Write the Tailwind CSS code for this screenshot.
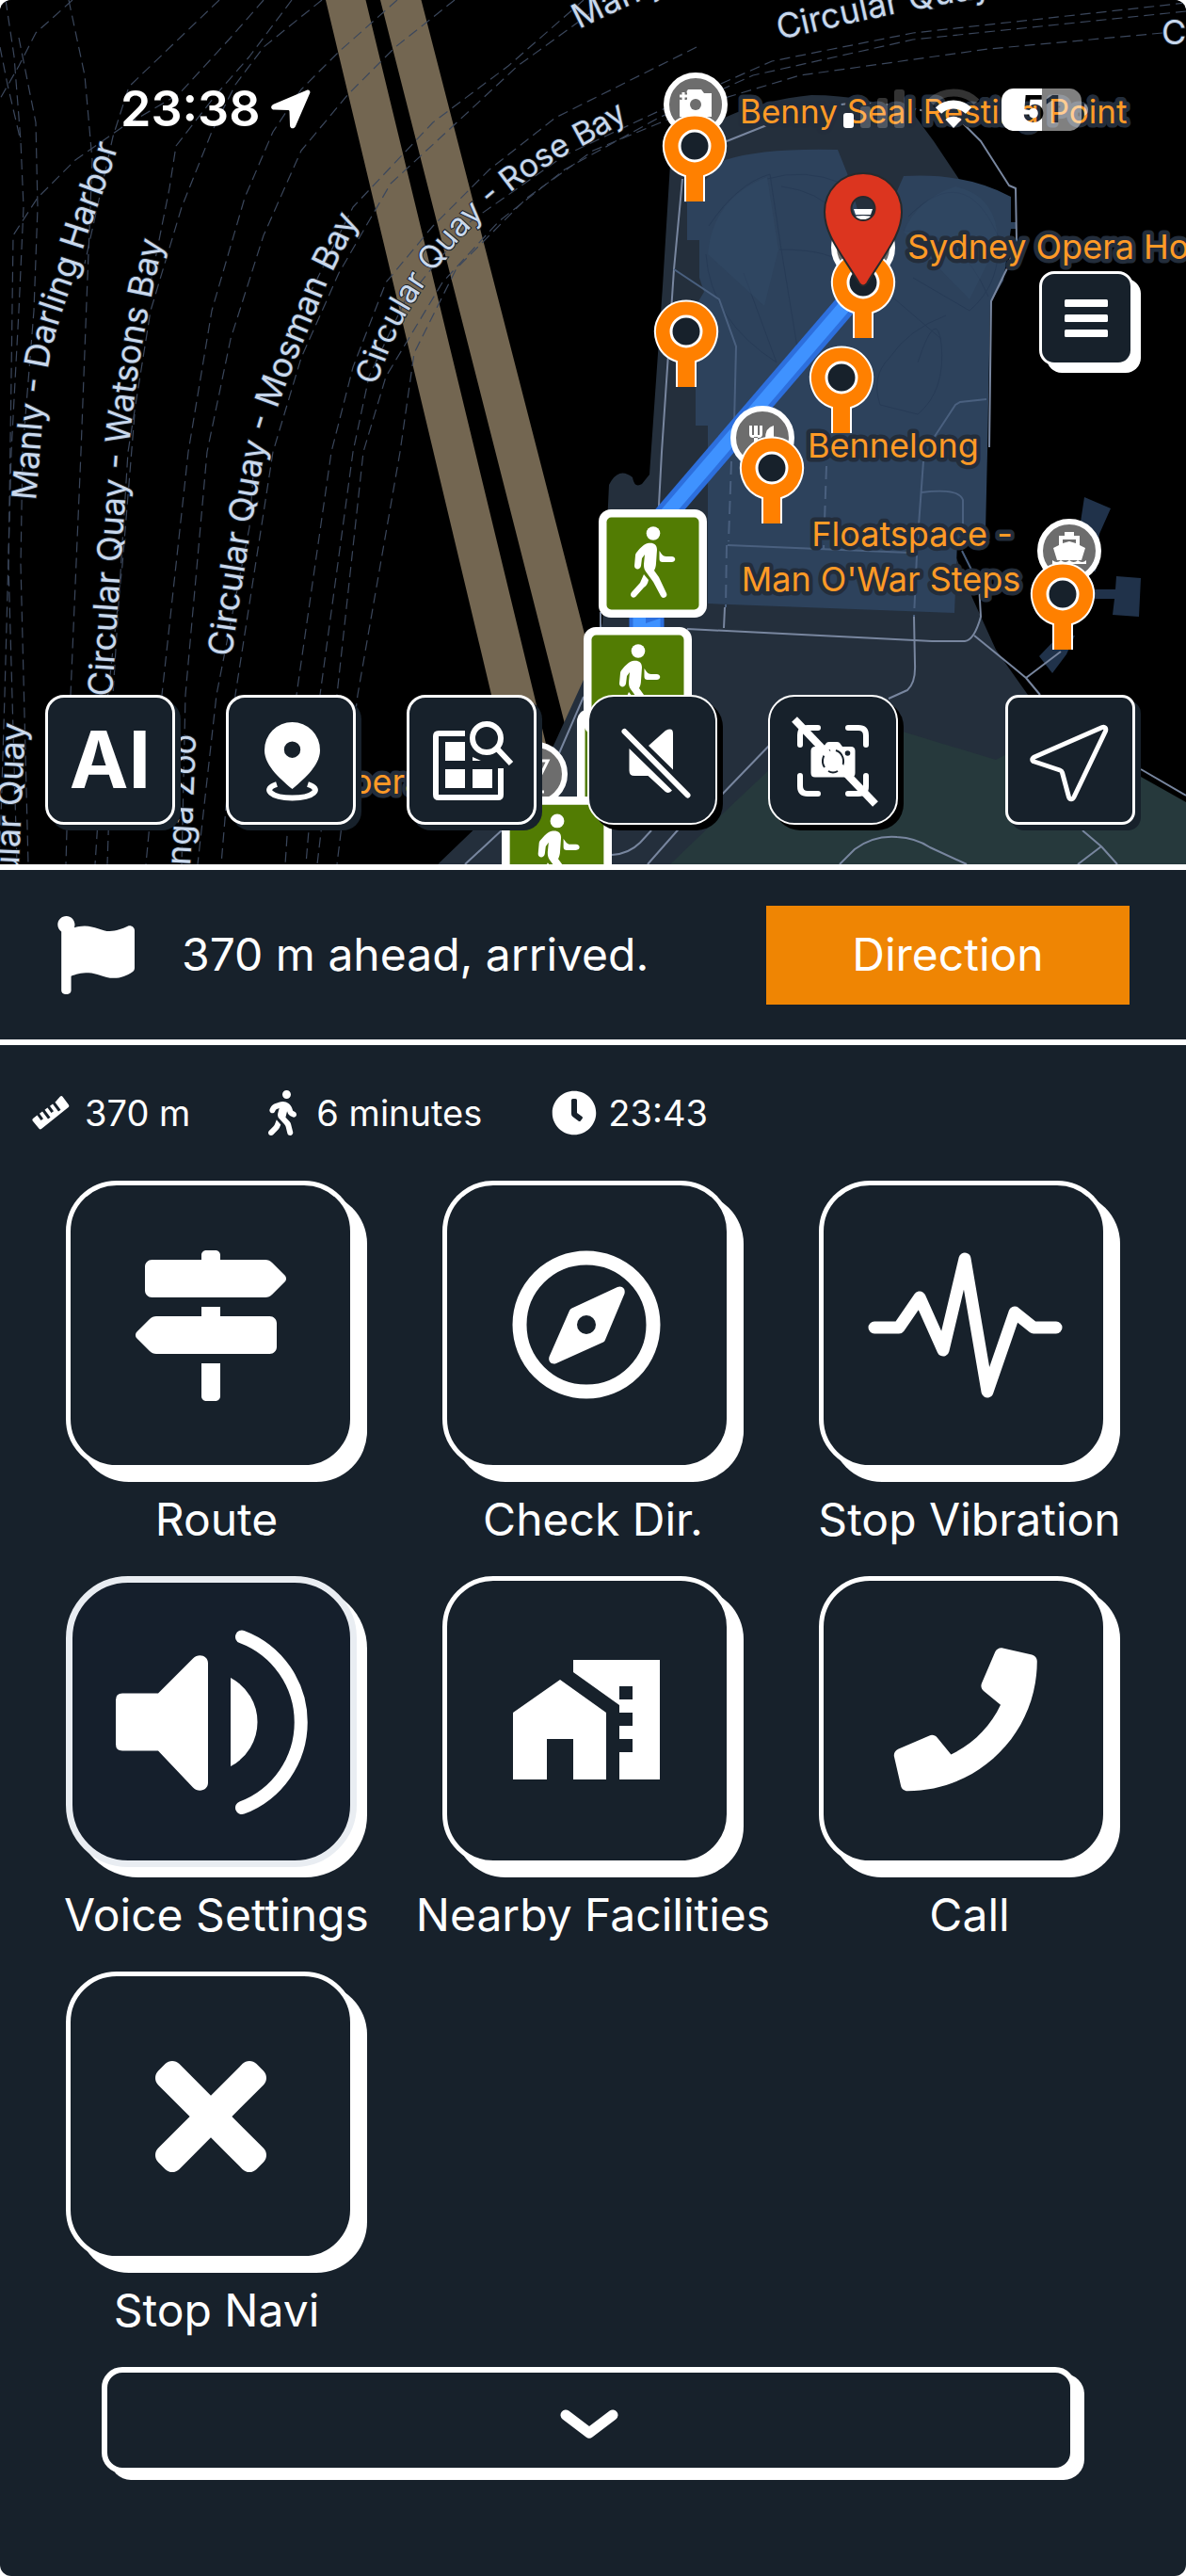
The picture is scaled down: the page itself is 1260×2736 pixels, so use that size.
<!DOCTYPE html>
<html lang="en">
<head>
    <meta charset="UTF-8">
    <meta name="viewport" content="width=device-width, initial-scale=1.0">
    <title>Walking Navigation</title>
    <script src="https://cdn.jsdelivr.net/npm/@tailwindcss/browser@4"></script>
</head>
<body class="bg-white font-['Inter','Liberation_Sans',sans-serif] text-white">
    <div class="min-h-screen flex flex-col bg-[#17212b] rounded-xl overflow-hidden">

        <!-- Map -->
        <section class="relative h-[918px] bg-black overflow-hidden" aria-label="Map">
            <svg class="absolute inset-0 w-full h-full" viewBox="0 0 1260 918" preserveAspectRatio="xMidYMid slice">
                <defs>
                    <symbol id="pin" viewBox="0 0 70 96" overflow="visible">
                        <path d="M35 1.5a33 33 0 0 1 10 64.500V93H25V66A33 33 0 0 1 35 1.500z" fill="#ff8000"/>
                        <path d="M25 93V66a33 33 0 1 1 20 0v27" fill="none" stroke="#fff" stroke-width="2"/>
                        <circle cx="35" cy="34" r="16" fill="#17212b" stroke="#fff" stroke-width="3"/>
                    </symbol>
                    <symbol id="poi" viewBox="0 0 70 70">
                        <circle cx="35" cy="35" r="31" fill="#6d6d6d" stroke="#fff" stroke-width="6"/>
                    </symbol>
                    <symbol id="sign" viewBox="0 0 115 115">
                        <rect width="115" height="115" rx="13" fill="#fff"/>
                        <rect x="8.500" y="8.500" width="98" height="98" rx="5" fill="#527c03"/>
                        <circle cx="58" cy="25.500" r="7.300" fill="#fff"/>
                        <path d="M52 36c6-1 10 1 10 7l-1 14c0 3-1 6-2 8l5 7 8 17c2 4-4 7-6 3l-8-15-8-11c-2-3-2-5-2-8l1-10-3 4-1 8c-1 5-7 4-7 0l1-11c0-2 1-3 2-4 3-4 7-8 11-9z" fill="#fff"/>
                        <path d="M48 69l5 6c-1 4-2 6-5 8l-8 9c-3 4-8 0-5-4l9-10z" fill="#fff"/>
                        <path d="M64.500 44c2 3 4 6 7 6h6c5 0 5 6 0 6h-9c-3 0-4-1-4-4z" fill="#fff"/>
                    </symbol>
                    <path id="lblManly" d="M38 532C43 480 45 430 52 385C60 340 75 310 88 265C100 225 114 195 124 160"/>
                    <path id="lblWatsons" d="M119 740C124 660 131 560 137 475C143 410 153 350 162 310C167 285 172 265 178 230"/>
                    <path id="lblMosman" d="M246 698C255 630 268 550 280 485C290 435 318 375 350 295C364 268 376 242 392 212"/>
                    <path id="lblRose" d="M400 410C418 350 445 310 470 277C500 235 560 185 615 157C640 145 660 130 690 112"/>
                    <path id="lblTop" d="M615 31C656 10 700 -8 740 -22"/>
                    <path id="lblTop2" d="M828 42C885 30 945 12 1080 -8"/>
                    <path id="lblLeft" d="M16 1010C20 920 23 850 27 768"/>
                    <path id="lblZoo" d="M193 1040C202 940 205 870 208 780"/>
                </defs>

                <!-- Bridge -->
                <path d="M346 0h42.500L611 918h-46zM404 0h43.500L684 918h-46z" fill="#736651"/>

                <!-- Ferry lines -->
                <g fill="none" stroke="#3b475c" stroke-width="1.200" stroke-dasharray="11 6" stroke-linejoin="round">
                    <path d="M6 0L15 60 22 150 25 220 20 330 12 480 5 738 0 900"/>
                    <path d="M0 50L8 90 22 150M20 40L38 130 40 220 36 330 24 480 22 600 30 918"/>
                    <path d="M77 0L38 35 20 70 0 105"/>
                    <path d="M73 0L90 80 98 170 92 320 86 480 75 738 70 918"/>
                    <path d="M233 0L137 92 120 145 90 280"/>
                    <path d="M280 0L245 40 190 100 130 135 80 170 40 210 14 250 12 400 9 600 18 918"/>
                    <path d="M310 0L265 60 230 100 187 155 180 200 160 300M143 440L130 600 110 780 101 918"/>
                    <path d="M342 0L280 50 250 90 225 140 193 220 160 330 136 480 120 738 114 918"/>
                    <path d="M422 0L360 55 320 95 290 140 260 210 225 330 200 480 172 738 155 918"/>
                    <path d="M483 0L420 50 370 100 320 160 280 250 245 360 220 480 197 738 193 918"/>
                    <path d="M620 0L540 70 460 130 375 220 330 310M270 490L265 560 230 738 210 918"/>
                    <path d="M630 12L550 70 480 135 415 195 360 290 320 380 290 480 250 738 235 918"/>
                    <path d="M740 50L650 95 590 125 520 180 460 240 410 300 375 390 352 480 315 738 303 918"/>
                    <path d="M1260 3L970 35 820 65 700 118 600 165 500 235 430 320 392 400 375 480 340 738 325 918"/>
                    <path d="M1260 12L970 42 800 80 700 125 600 180 530 235 470 300 410 400 386 480 358 738 337 918"/>
                    <path d="M1235 35L1050 52 850 80 750 110 630 160 560 210 485 285 440 375 425 480 380 738 358 918"/>
                </g>

                <!-- Land -->
                <path d="M465 918l55-53 68-73 32-70 20-60 7-147q10-20 25-8 2 12 10 7l8-10 14-200 8-130q20-30 60-50 40-18 90-23 60 0 110 22l20 27 30 45 12 10-1 85-27 45-5 245 10 0 22 55 25 55 34 48 75 65q25 18 48 30V918z" fill="#242f3c"/>
                <path d="M712 918l55-53 53-50 60-55 79 17 99 30 32-17 122 35 48 27v66z" fill="#26393c"/>
                <path d="M1152 528l28 12-12 27-4 40h-24zM1186 612l26 2-2 41-28-2 2-17h-26v-10h27zM1104 697l21-22 17 0-9 20-15 20z" fill="#20324a"/>

                <!-- Opera House -->
                <path d="M770 170q40-13 120-11l10 25 20 70 33-51 7-16q65-4 114 22v27h6v7h-6l-8 55-14 24-3 158-2 85-30 10-3 76-262-10V452h-13V325l9-15-5-15v-40h-13v-40h-4z" fill="#2d425c"/>
                <g fill="none" stroke="#273b56" stroke-width="1">
                    <path d="M753 240q30-45 65-55l12 80 18 110M830 198q40 5 60 30M828 265q60 0 70 20M750 270q5 70 75 115l-35-95M815 190q40-12 80 5M965 230q60-60 95 20 5 50-30 80l-60-35M975 385q20-60 25-20 5 50-25 75l-40-10q-10-30 10-50 20-30 60-45M930 300l70 60M960 245q60 0 90 70"/>
                </g>
                <path d="M815 188l12 77-15 60-60-55q5-60 63-82z" fill="#324966" opacity=".5"/>
                <path d="M1015 198q45 10 45 60l-30 60-70-72q15-35 55-48z" fill="#324966" opacity=".5"/>

                <!-- Footpaths -->
                <g fill="none" stroke="#78869f" stroke-width="2" stroke-linejoin="round">
                    <path d="M725 190l-9 96-13 194-4 75M772 150l50-20 48-15M1020 128l22 22 30 47 7 3 1 55-10 30-17 35-2 155"/>
                    <path d="M870 115q60-15 150 13" stroke-dasharray="8 4"/>
                    <path d="M697 553l-20-3M670 548q-16-2-19 10M638 650l0 20M730 668l241 12 19 1h35q10-1 17-26l-2-35"/>
                    <path d="M1035 675l43 35 12 10 15 18M1090 720l37-28M770 645l-1 22M971 655l1 50q1 20-8 28l-20 9M817 792l-56 58M688 918l37-42M892 918l16-16q20-15 45-13 20 1 35 11l39 18M1150 882l20 17 17 19M1170 899l-25 19M1212 817l48 28M494 918l41-38M620 740l-26 60M650 908q18-1 30-13l12-13"/>
                </g>
                <g fill="none" stroke="#4a607f" stroke-width="2">
                    <path d="M716 286l48 32 18 50-2 82M992 465l23-35 5-3 28-3M773 579l193 8M981 490l-7 95M979 523q40-5 44 8v50M1022 585l10 20"/>
                    <path d="M772 579l-1 66M777 490l-3 85M878 495l-3 88M974 590l-3 65" stroke-dasharray="14 7"/>
                </g>

                <!-- Route -->
                <path d="M900 322L700 555" stroke="#2d6fdd" stroke-width="24"/>
                <path d="M900 322L700 555" stroke="#3f92ff" stroke-width="14"/>
                <path d="M687 640v40" stroke="#2d6fdd" stroke-width="37"/>
                <path d="M687 640v40" stroke="#3f92ff" stroke-width="29"/>
                <path d="M686 656l18 0-18 6z" fill="#2d6fdd"/>

                <!-- Ferry labels -->
                <g fill="#c9d8ec" stroke="#17212b" stroke-width="2" paint-order="stroke" font-size="36">
                    <text><textPath href="#lblManly">Manly - Darling Harbor</textPath></text>
                    <text><textPath href="#lblWatsons">Circular Quay - Watsons Bay</textPath></text>
                    <text><textPath href="#lblMosman">Circular Quay - Mosman Bay</textPath></text>
                    <text font-size="34"><textPath href="#lblRose">Circular Quay - Rose Bay</textPath></text>
                    <text><textPath href="#lblTop">Manly</textPath></text>
                    <text><textPath href="#lblTop2">Circular Quay</textPath></text>
                    <text x="1234" y="47">C</text>
                    <text text-anchor="end"><textPath href="#lblLeft" startOffset="100%">Circular Quay</textPath></text>
                    <text text-anchor="end"><textPath href="#lblZoo" startOffset="100%">Taronga Zoo</textPath></text>
                </g>

                <!-- Points of interest -->
                <use href="#poi" x="704" y="76" width="70" height="70"/>
                <path d="M722 99h6l3-4h14l3 4h8v25h-34z" fill="#fff"/>
                <circle cx="739" cy="111" r="6" fill="#6d6d6d"/>
                <path d="M720 102h10M726 97v9" stroke="#6d6d6d" stroke-width="7"/>
                <path d="M722 102h8M726 98v8" stroke="#fff" stroke-width="3"/>
                <use href="#poi" x="775" y="430" width="70" height="70"/>
                <path d="M796 452v9q0 4 4 4h6q4 0 4-4v-9h-3v10h-2v-10h-4v10h-2v-10zM801 464h4v14h-4zM822 452q-9 2-9 14h5v12h4z" fill="#fff"/>
                <use href="#poi" x="1101" y="550" width="70" height="70"/>
                <path d="M1131 565h10v4h6v10l6 3-4 13h-26l-4-13 6-3v-10h6zM1129 573v4l7-2 7 2v-4zM1118 595q5 4 9 0 5 4 9 0 5 4 9 0 5 4 9 0v4h-36z" fill="#fff" fill-rule="evenodd"/>
                <use href="#poi" x="882" y="228" width="70" height="70"/>
                <use href="#poi" x="534" y="787" width="70" height="70"/>
                <path d="M570 808h12l-8 16M574 841h4" stroke="#fff" stroke-width="3" fill="none"/>

                <!-- Place labels -->
                <g fill="#ff9a26" stroke="#232d3b" stroke-width="9" stroke-linejoin="round" paint-order="stroke" font-size="36">
                    <text x="786" y="131" font-size="35">Benny Seal Resting Point</text>
                    <text x="964" y="275">Sydney Opera House</text>
                    <text x="969" y="580" text-anchor="middle">Floatspace -</text>
                    <text x="936" y="628" text-anchor="middle">Man O'War Steps</text>
                    <text x="346" y="843">Opera</text>
                </g>

                <use href="#pin" x="703" y="121" width="70" height="96"/>
                <use href="#pin" x="882" y="266" width="70" height="96"/>
                <use href="#pin" x="694" y="318" width="70" height="96"/>
                <use href="#pin" x="859" y="367" width="70" height="96"/>
                <use href="#pin" x="785" y="463" width="70" height="96"/>
                <use href="#pin" x="1094" y="597" width="70" height="96"/>
                <text x="858" y="486" font-size="36" fill="#ff9a26" stroke="#232d3b" stroke-width="9" stroke-linejoin="round" paint-order="stroke">Bennelong</text>

                <!-- Destination -->
                <path d="M917 184c23 0 41 18 41 41 0 24-17 43-37 76q-4 5-8 0c-20-33-37-52-37-76 0-23 18-41 41-41zm0 25a12.500 12.500 0 1 0 0 25 12.500 12.500 0 0 0 0-25z" fill="#dc351f" stroke="#27292c" stroke-width="2" fill-rule="evenodd"/>
                <path d="M907 222h20l-2 6h-16z" fill="#fff"/>

                <use href="#sign" x="613" y="753" width="115" height="115"/>
                <use href="#sign" x="620" y="666" width="115" height="115"/>
                <use href="#sign" x="636" y="541" width="115" height="115"/>
                <use href="#sign" x="533" y="846" width="117" height="117"/>
            </svg>

            <!-- Status bar -->
            <div class="absolute inset-x-0 top-[90px] h-[52px] pl-[128px] pr-[104px] flex items-center justify-between">
                <div class="flex items-center gap-3">
                    <span class="text-[52px] leading-[52px] font-semibold">23:38</span>
                    <svg class="w-[42px] h-[42px]" viewBox="0 0 42 42" fill="#fff"><path d="M38 .8c2-1 4 .8 3.300 3L26 39c-1.500 3.500-6 3-6-1l-.5-14.500c0-1-.5-1.500-1.500-1.500L3.500 21.500c-4 0-4.500-4-1-5.800z"/></svg>
                </div>
                <div class="flex items-center gap-6">
                    <svg class="w-[66px] h-[44px]" viewBox="0 0 66 44" fill="#fff">
                        <rect y="26" width="11" height="16" rx="3"/>
                        <g opacity=".2"><rect x="18" y="19" width="11" height="23" rx="3"/><rect x="36" y="10" width="11" height="32" rx="3"/><rect x="54" y="1" width="11" height="41" rx="3"/></g>
                    </svg>
                    <svg class="w-[54px] h-[44px]" viewBox="0 0 54 44" fill="none" stroke="#fff">
                        <path d="M2.500 14.500a35 35 0 0 1 49 0" stroke-width="8" opacity=".2"/>
                        <path d="M11 23.500a23 23 0 0 1 32 0" stroke-width="9"/>
                        <path d="M27 42l-8.500-9a13 13 0 0 1 17 0z" fill="#fff" stroke="none"/>
                    </svg>
                    <svg class="w-[92px] h-[46px]" viewBox="0 0 92 46">
                        <mask id="level">
                            <rect width="92" height="46" fill="#fff"/>
                            <text x="42" y="37" text-anchor="middle" font-size="39" font-weight="700" fill="#000">51</text>
                        </mask>
                        <g mask="url(#level)">
                            <path d="M14 1h29v45H14A13 13 0 0 1 0 33V14A13 13 0 0 1 14 1z" fill="#fff"/>
                            <path d="M43 1h28a13 13 0 0 1 14 13v19a13 13 0 0 1-14 13H43z" fill="#fff" opacity=".5"/>
                        </g>
                        <path d="M88 17q4 2 4 6.500T88 30z" fill="#fff" opacity=".5"/>
                    </svg>
                </div>
            </div>

            <button aria-label="Menu" class="absolute right-14 top-[288px] size-[100px] grid place-items-center bg-[#17212b] border-[3px] border-white rounded-[16px] shadow-[8px_8px_0_#fff]">
                <svg class="w-[46px] h-[42px]" viewBox="0 0 46 42" fill="#fff"><rect y="1" width="46" height="8" rx="1.500"/><rect y="17" width="46" height="8" rx="1.500"/><rect y="33" width="46" height="8" rx="1.500"/></svg>
            </button>

            <!-- Map controls -->
            <div class="absolute inset-x-0 bottom-[42px] pl-12 pr-[54px] flex gap-[54px]">
                <button class="size-[138px] bg-[#17212b] border-[3px] border-white rounded-[20px] shadow-[6px_6px_0_#17212b] text-[84px] leading-none font-bold">AI</button>
                <button aria-label="Current place" class="size-[138px] bg-[#17212b] border-[3px] border-white rounded-[20px] shadow-[6px_6px_0_#17212b]">
                    <svg viewBox="3 3 132 132">
                        <path d="M70.500 29a29.500 29.500 0 0 1 29.500 30c0 17-20 33-29.500 41C61 92 41 76 41 59a29.500 29.500 0 0 1 29.500-30zm0 20.500a8.700 8.700 0 1 0 0 17.400 8.700 8.700 0 0 0 0-17.400z" fill="#fff" fill-rule="evenodd"/>
                        <path d="M54 95c-16 5-6 14.500 16.500 14.500S103 100 87 95" fill="none" stroke="#fff" stroke-width="6"/>
                    </svg>
                </button>
                <button aria-label="Search floor map" class="size-[138px] bg-[#17212b] border-[3px] border-white rounded-[20px] shadow-[6px_6px_0_#17212b]">
                    <svg viewBox="3 3 132 132" fill="none" stroke="#fff" stroke-width="6">
                        <path d="M62 41H34q-3 0-3 3v62q0 3 3 3h63q3 0 3-3V78"/>
                        <path d="M41 50h21v20H41zM41 79h21v20H41zM70 79h21v20H70z" fill="#fff" stroke="none"/>
                        <path d="M70 66l9 4h-9z" fill="#fff" stroke="none"/>
                        <circle cx="85" cy="46" r="15"/>
                        <path d="M96 57l15 16"/>
                    </svg>
                </button>
                <button aria-label="Unmute" class="size-[138px] bg-[#17212b] border-2 border-white rounded-[28px] shadow-[6px_6px_0_#000]">
                    <svg viewBox="2 2 134 134" fill="#fff">
                        <path d="M65 54l18-16q8-4 8 3v38.500zM44.500 57L90 101.500q-3 4-7 1.500L64.500 86H50q-5.500 0-5.500-5.500z"/>
                        <path d="M39.500 39l67 67.500" stroke="#fff" stroke-width="6" stroke-linecap="round"/>
                    </svg>
                </button>
                <button aria-label="Camera scan off" class="size-[138px] bg-[#17212b] border-2 border-white rounded-[28px] shadow-[6px_6px_0_#000]">
                    <svg viewBox="2 2 134 134" fill="none">
                        <path d="M34 53V43q0-8 8-8h11M85 35h11q8 0 8 8v10M104 86v11q0 8-8 8H85M53 105H42q-8 0-8-8V86" stroke="#fff" stroke-width="6" stroke-linecap="round"/>
                        <path d="M50 55h9l3-4q1-1 3-1h8q2 0 3 1l3 4h9q4.500 0 4.500 4.500V83q0 4.500-4.500 4.500H50q-4.500 0-4.500-4.500V59.500Q45.500 55 50 55z" fill="#fff"/>
                        <path d="M66 59a12 12 0 0 0-6 18M72 59a12 12 0 0 1 6 18M64 81q5 3 10 0" stroke="#17212b" stroke-width="2"/>
                        <circle cx="84.500" cy="62" r="2.800" fill="#17212b"/>
                        <path d="M28 26l86 90" stroke="#fff" stroke-width="8"/>
                    </svg>
                </button>
                <button aria-label="Locate me" class="ml-auto size-[138px] bg-[#17212b] border-[3px] border-white rounded-[14px] shadow-[6px_6px_0_#17212b]">
                    <svg viewBox="3 3 132 132" fill="none" stroke="#fff" stroke-width="5" stroke-linejoin="round">
                        <path d="M103 34.500L31 66c-3 1.500-3 4 0 5l27 9c1.500.5 2 1 2.500 2.500l7 26c1 3 4 3 5.500 0l33.500-70c1-3-1-5-3.500-4z"/>
                    </svg>
                </button>
            </div>
        </section>

        <!-- Next step -->
        <section class="h-48 border-y-[6px] border-white px-[60px] flex items-center">
            <svg class="size-[83px]" viewBox="0 0 512 512" fill="#fff"><path d="M349.565 98.783C295.978 98.783 251.721 64 184.348 64c-24.955 0-47.309 4.384-68.045 12.013a55.947 55.947 0 0 0 3.586-23.562C118.117 24.015 94.806 1.206 66.338.048 34.345-1.254 8 24.296 8 56c0 19.026 9.497 35.825 24 45.945V488c0 13.255 10.745 24 24 24h16c13.255 0 24-10.745 24-24v-94.400c28.311-12.064 63.582-22.122 114.435-22.122 53.588 0 97.844 34.783 165.217 34.783 48.169 0 86.667-16.294 122.505-40.858C506.840 359.452 512 349.571 512 339.045v-243.100c0-23.393-24.269-38.870-45.485-29.016-34.338 15.948-76.454 31.854-116.950 31.854z"/></svg>
            <p class="ml-[50px] text-[48px] leading-[60px]">370 m ahead, arrived.</p>
            <button class="ml-auto w-[386px] h-[105px] bg-[#ef8503] text-[48px] leading-[60px]">Direction</button>
        </section>

        <!-- Trip summary -->
        <ul class="pt-12 pl-[30px] flex gap-[74px] text-[38px] leading-[48px]">
            <li class="flex items-center gap-3">
                <svg class="size-12" viewBox="0 0 48 48" fill="#fff"><path d="M5 30l4.500-3.500 4 5.500 2.500-1.800-4-5.500 3-2.200 6 8 2.500-1.800-6-8 3-2.200 4 5.500 2.500-1.800-4-5.500 3-2.200 6 8 2.500-1.800-6-8L34 6.500q1.500-1 2.500.3l6.500 8.700q1 1.500-.3 2.500L14 41q-1.500 1-2.500-.3L4.700 32.500q-1-1.500.3-2.500z"/></svg>
                370 m
            </li>
            <li class="flex items-center gap-3">
                <svg class="size-12" viewBox="-96 0 512 512" fill="#fff"><path d="M208 96c26.500 0 48-21.500 48-48S234.500 0 208 0s-48 21.500-48 48 21.500 48 48 48zm94.500 149.100l-23.300-11.800-9.700-29.400c-14.700-44.600-55.700-75.800-102.200-75.900-36-.1-55.900 10.100-93.300 25.200-21.600 8.700-39.300 25.200-49.700 46.200L17.600 213c-7.800 15.800-1.500 35 14.200 42.900 15.600 7.900 34.600 1.500 42.500-14.300L81 228c3.500-7 9.300-12.500 16.500-15.400l26.800-10.800-15.200 60.700c-5.200 20.800.4 42.900 14.900 58.800l59.900 65.400c7.200 7.900 12.300 17.400 14.900 27.700l18.300 73.300c4.300 17.100 21.700 27.600 38.800 23.300 17.100-4.300 27.600-21.700 23.300-38.800l-22.200-89c-2.600-10.300-7.700-19.900-14.900-27.700l-45.500-49.700 17.200-68.700 5.500 16.500c5.300 16.100 16.700 29.400 31.700 37l23.300 11.800c15.600 7.900 34.600 1.500 42.500-14.300 7.700-15.700 1.400-35.100-14.300-43zM73.600 385.800c-3.200 8.100-8 15.400-14.200 21.500l-50 50.100c-12.500 12.500-12.500 32.800 0 45.300s32.700 12.500 45.200 0l59.400-59.400c6.100-6.100 10.900-13.400 14.200-21.500l13.500-33.800c-55.300-60.300-38.700-41.800-47.400-53.700l-20.700 51.500z"/></svg>
                6 minutes
            </li>
            <li class="flex items-center gap-3">
                <svg class="size-12" viewBox="0 0 512 512" fill="#fff"><path d="M256,8C119,8,8,119,8,256S119,504,256,504,504,393,504,256,393,8,256,8Zm92.490,313h0l-20,25a16,16,0,0,1-22.490,2.500h0l-67-49.720a40,40,0,0,1-15-31.230V112a16,16,0,0,1,16-16h32a16,16,0,0,1,16,16V256l58,42.500A16,16,0,0,1,348.490,321Z"/></svg>
                23:43
            </li>
        </ul>

        <!-- Actions -->
        <div class="mt-12 px-[30px] grid grid-cols-3 gap-y-[30px] text-[48px] leading-[60px] text-center whitespace-nowrap">
            <div class="flex flex-col items-center gap-[10px]">
                <div class="size-80">
                    <button aria-labelledby="route" class="size-[307px] grid place-items-center border-[5px] border-white rounded-[54px] bg-[#17212b] shadow-[13px_13px_0_#fff]">
                        <svg class="size-40" viewBox="0 0 512 512" fill="#fff"><path d="M507.310 84.690L464 41.370c-6-6-14.140-9.370-22.630-9.370H288V16c0-8.840-7.160-16-16-16h-32c-8.840 0-16 7.160-16 16v16H56c-13.250 0-24 10.750-24 24v80c0 13.250 10.750 24 24 24h385.370c8.490 0 16.620-3.370 22.630-9.370l43.310-43.310c6.250-6.260 6.250-16.380 0-22.630zM224 496c0 8.840 7.160 16 16 16h32c8.840 0 16-7.160 16-16V384h-64v112zm232-272H288v-32h-64v32H70.630c-8.490 0-16.620 3.370-22.630 9.370L4.690 276.690c-6.250 6.250-6.250 16.380 0 22.630L48 342.630c6 6 14.140 9.370 22.630 9.370H456c13.250 0 24-10.750 24-24v-80c0-13.250-10.750-24-24-24z"/></svg>
                    </button>
                </div>
                <span id="route">Route</span>
            </div>
            <div class="flex flex-col items-center gap-[10px]">
                <div class="size-80">
                    <button aria-labelledby="check" class="size-[307px] grid place-items-center border-[5px] border-white rounded-[54px] bg-[#17212b] shadow-[13px_13px_0_#fff]">
                        <svg class="size-40" viewBox="0 0 160 160">
                            <circle cx="79" cy="79" r="71" fill="none" stroke="#fff" stroke-width="15"/>
                            <path d="M112 39c4-2 9 1 7.500 7L99 95q-.5 1.500-2 2.500L47 120c-5 2-9-2-7.500-7L61 64q.8-1.800 2.500-2.500zM79 69a10 10 0 1 0 0 20 10 10 0 0 0 0-20z" fill="#fff" fill-rule="evenodd"/>
                        </svg>
                    </button>
                </div>
                <span id="check">Check Dir.</span>
            </div>
            <div class="flex flex-col items-center gap-[10px]">
                <div class="size-80">
                    <button aria-labelledby="vibration" class="size-[307px] grid place-items-center border-[5px] border-white rounded-[54px] bg-[#17212b] shadow-[13px_13px_0_#fff]">
                        <svg class="size-[297px]" viewBox="5 5 297 297" fill="none" stroke="#fff" stroke-width="13" stroke-linecap="round" stroke-linejoin="round">
                            <path d="M59 156h26l22-32 25 56 23-97 24 141 29-84 20 16h24"/>
                        </svg>
                    </button>
                </div>
                <span id="vibration">Stop Vibration</span>
            </div>
            <div class="flex flex-col items-center gap-[10px]">
                <div class="size-80">
                    <button aria-labelledby="voice" class="size-[309px] grid place-items-center border-[7px] border-[#e9edf2] rounded-[66px] bg-[#151f2c] shadow-[11px_11px_0_#fff]">
                        <svg class="size-[295px]" viewBox="7 7 295 295" fill="#fff">
                            <path d="M60 124.500h38l37-37c6-6 16-3 16 5v127c0 8-10 11-16 5l-37-39H60q-7 0-7-7v-47q0-7 7-7zM175 108a53 53 0 0 1 0 94z"/>
                            <path d="M187 64.500a97 97 0 0 1 0 181.500" fill="none" stroke="#fff" stroke-width="14" stroke-linecap="round"/>
                        </svg>
                    </button>
                </div>
                <span id="voice">Voice Settings</span>
            </div>
            <div class="flex flex-col items-center gap-[10px]">
                <div class="size-80">
                    <button aria-labelledby="nearby" class="size-[307px] grid place-items-center border-[5px] border-white rounded-[54px] bg-[#17212b] shadow-[13px_13px_0_#fff]">
                        <svg class="size-[297px]" viewBox="5 5 297 297" fill="#fff">
                            <path d="M75 145l50-35 49 35v71h-35v-43h-28v43H75z"/>
                            <path d="M139 89h92v127h-43v-29h14v-14h-14v-14h14v-14h-14v-8l-49-35zM188 117v14h14v-14z" fill-rule="evenodd"/>
                        </svg>
                    </button>
                </div>
                <span id="nearby">Nearby Facilities</span>
            </div>
            <div class="flex flex-col items-center gap-[10px]">
                <div class="size-80">
                    <button aria-labelledby="call" class="size-[307px] grid place-items-center border-[5px] border-white rounded-[54px] bg-[#17212b] shadow-[13px_13px_0_#fff]">
                        <svg class="size-[152px]" viewBox="-6 6 512 512" overflow="visible" fill="#fff"><path d="M493.400 24.600l-104-24c-11.300-2.600-22.900 3.300-27.500 13.900l-48 112c-4.200 9.800-1.400 21.300 6.900 28l60.600 49.600c-36 76.700-98.900 140.500-177.200 177.200l-49.600-60.600c-6.800-8.300-18.200-11.100-28-6.900l-112 48C3.900 366.500-2 378.100.6 389.400l24 104C27.100 504.200 36.700 512 48 512c256.100 0 464-207.500 464-464 0-11.200-7.700-20.900-18.600-23.400z"/></svg>
                    </button>
                </div>
                <span id="call">Call</span>
            </div>
            <div class="flex flex-col items-center gap-[10px]">
                <div class="size-80">
                    <button aria-labelledby="stop" class="size-[307px] grid place-items-center border-[5px] border-white rounded-[54px] bg-[#17212b] shadow-[13px_13px_0_#fff]">
                        <svg class="size-[118px]" viewBox="0 80 352 352" fill="#fff"><path d="M242.720 256l100.070-100.070c12.280-12.280 12.280-32.190 0-44.480l-22.240-22.240c-12.280-12.280-32.190-12.280-44.480 0L176 189.280 75.930 89.210c-12.280-12.280-32.190-12.280-44.480 0L9.210 111.450c-12.280 12.280-12.280 32.190 0 44.480L109.280 256 9.210 356.070c-12.280 12.280-12.280 32.190 0 44.480l22.240 22.240c12.280 12.280 32.200 12.280 44.480 0L176 322.720l100.070 100.070c12.280 12.280 32.200 12.280 44.480 0l22.240-22.240c12.280-12.280 12.280-32.190 0-44.480L242.720 256z"/></svg>
                    </button>
                </div>
                <span id="stop">Stop Navi</span>
            </div>
        </div>

        <!-- Collapse panel -->
        <div class="mt-[30px] pl-[108px] pr-[117px] pb-[109px]">
            <button aria-label="Collapse" class="w-full h-[113px] pt-2 grid place-items-center border-[6px] border-white rounded-[22px] bg-[#17212b] shadow-[9px_7px_0_#fff]">
                <svg class="w-[62px] h-8" viewBox="0 0 62 32" fill="none" stroke="#fff" stroke-width="11" stroke-linecap="round" stroke-linejoin="round"><path d="M6 6l25 19L56 6"/></svg>
            </button>
        </div>
    </div>
</body>
</html>
